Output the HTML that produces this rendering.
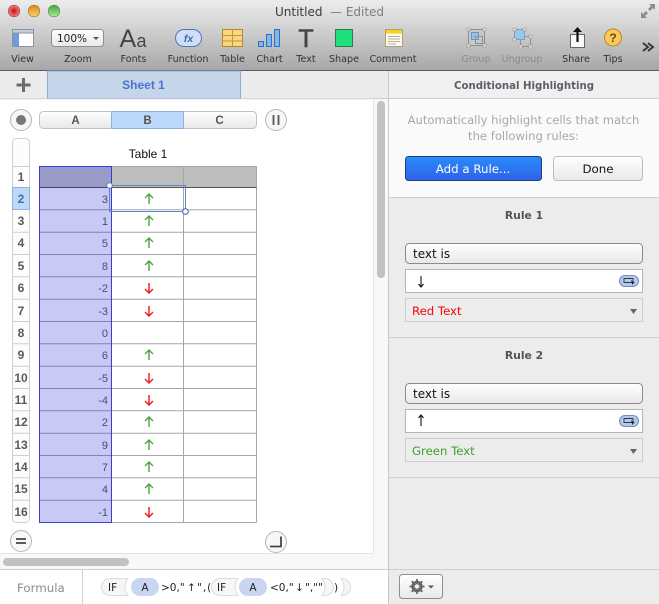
<!DOCTYPE html>
<html><head><meta charset="utf-8"><style>
html,body{margin:0;padding:0;background:#fff;width:659px;height:604px;overflow:hidden}
svg{display:block}
text{font-family:"DejaVu Sans","Liberation Sans",sans-serif}
.l{font-size:9.6px;fill:#333;text-anchor:middle}
.g{font-size:9.6px;fill:#8b8b8b;text-anchor:middle}
.h{font-family:"Liberation Sans",sans-serif;font-weight:bold;font-size:11.5px;fill:#555;text-anchor:middle}
.r{font-family:"Liberation Sans",sans-serif;font-weight:bold;font-size:12px;fill:#5a5a5a;text-anchor:middle}
.n{font-family:"Liberation Sans",sans-serif;font-size:11px;fill:#4a4a78;text-anchor:end}
.i{font-size:12px;fill:#111}
.f{font-size:10.5px;fill:#222}
.c{fill:#f6f6f6;stroke:#dcdcdc}
</style></head><body>
<svg xmlns="http://www.w3.org/2000/svg" width="659" height="604" viewBox="0 0 659 604">
<defs>
<linearGradient id="tb" x1="0" y1="0" x2="0" y2="1"><stop offset="0" stop-color="#ececec"/><stop offset=".4" stop-color="#d2d2d2"/><stop offset="1" stop-color="#a8a8a8"/></linearGradient>
<linearGradient id="btn" x1="0" y1="0" x2="0" y2="1"><stop offset="0" stop-color="#fff"/><stop offset="1" stop-color="#e8e8e8"/></linearGradient>
<linearGradient id="blue" x1="0" y1="0" x2="0" y2="1"><stop offset="0" stop-color="#2a8bfb"/><stop offset="1" stop-color="#2f62ea"/></linearGradient>
<radialGradient id="rd"><stop offset="0" stop-color="#b01010"/><stop offset=".4" stop-color="#e03a3a"/><stop offset="1" stop-color="#f08080"/></radialGradient>
<linearGradient id="yl" x1="0" y1="0" x2="0" y2="1"><stop offset="0" stop-color="#d98a10"/><stop offset="1" stop-color="#fbd36c"/></linearGradient>
<linearGradient id="gr" x1="0" y1="0" x2="0" y2="1"><stop offset="0" stop-color="#3fa53f"/><stop offset="1" stop-color="#a8ec98"/></linearGradient>
</defs>

<!-- title/toolbar -->
<rect width="659" height="70" fill="url(#tb)"/>
<rect y="70" width="659" height="1" fill="#5c5c5c"/>
<circle cx="14" cy="11" r="5.8" fill="url(#rd)" stroke="#8a4a4a" stroke-width=".6"/>
<circle cx="34" cy="11" r="5.8" fill="url(#yl)" stroke="#96703a" stroke-width=".6"/>
<circle cx="54" cy="11" r="5.8" fill="url(#gr)" stroke="#4d8a4d" stroke-width=".6"/>
<text x="275" y="16" style="font-size:12px" fill="#3a3a3a">Untitled</text>
<text x="330" y="16" style="font-size:12px" fill="#7d7d7d">— Edited</text>
<path d="M641 18v-6l2 2 3-3 2 2-3 3 2 2zM655 4v6l-2-2-3 3-2-2 3-3-2-2z" fill="#8d8d8d"/>

<!-- View -->
<rect x="12.500" y="29.500" width="21" height="17" fill="#fff" stroke="#8a93a3"/>
<rect x="12.500" y="29.500" width="21" height="3.500" fill="#c8ccd4" stroke="#8a93a3"/>
<rect x="13" y="33" width="6" height="13" fill="#6f9bdc"/>
<text class="l" x="22.500" y="62">View</text>
<!-- Zoom -->
<rect x="51.500" y="29.500" width="52" height="17" rx="3" fill="url(#btn)" stroke="#8f8f8f"/>
<text x="57" y="42" style="font-size:10.500px" fill="#222">100%</text>
<path d="M93 37h6l-3 3z" fill="#555"/>
<text class="l" x="78" y="62">Zoom</text>
<!-- Fonts -->
<text x="119.500" y="47" style="font-family:'Liberation Sans',sans-serif;font-size:25px" fill="#444">A</text>
<text x="136.500" y="47" style="font-family:'Liberation Sans',sans-serif;font-size:18px" fill="#444">a</text>
<text class="l" x="133.500" y="62">Fonts</text>
<!-- Function -->
<rect x="175.500" y="29.500" width="26" height="17" rx="8.500" fill="#cfe0f6" stroke="#4f78b8"/>
<text x="188.500" y="42" style="font-family:'Liberation Sans',sans-serif;font-size:10.500px;font-style:italic;font-weight:bold;text-anchor:middle" fill="#3f69a8">fx</text>
<text class="l" x="188" y="62">Function</text>
<!-- Table -->
<rect x="222.500" y="29.500" width="20" height="17" fill="#fbd77c" stroke="#b5853a"/>
<path d="M222.500 35.500h20M222.500 41h20M232.500 29.500v17" stroke="#c2924a" fill="none"/>
<text class="l" x="232.500" y="62">Table</text>
<!-- Chart -->
<rect x="258.500" y="41.500" width="5" height="5" fill="#7db8ef" stroke="#2f71c0"/>
<rect x="266.500" y="34.500" width="5" height="12" fill="#7db8ef" stroke="#2f71c0"/>
<rect x="274.500" y="29.500" width="5" height="17" fill="#7db8ef" stroke="#2f71c0"/>
<text class="l" x="269.500" y="62">Chart</text>
<!-- Text -->
<text x="306" y="47" style="font-family:'Liberation Sans',sans-serif;font-size:25px;text-anchor:middle;stroke:#444;stroke-width:.6" fill="#444">T</text>
<text class="l" x="306" y="62">Text</text>
<!-- Shape -->
<rect x="335.500" y="29.500" width="17" height="17" fill="#1fe07a" stroke="#2d7a4d"/>
<text class="l" x="344" y="62">Shape</text>
<!-- Comment -->
<rect x="385.500" y="29.500" width="17" height="17" fill="#fdfbe6" stroke="#a8a27a"/>
<rect x="386" y="30" width="16" height="3.500" fill="#f7d21e"/>
<path d="M388 36.500h12M388 39h12M388 41.500h12M388 44h8" stroke="#999" stroke-width=".8"/>
<text class="l" x="393" y="62">Comment</text>
<!-- Group -->
<rect x="468.500" y="29.500" width="16" height="16" fill="#c8c8c8" stroke="#8f8f8f"/>
<rect x="471.500" y="32.500" width="7" height="7" fill="#97c0e6" stroke="#6f93b8"/>
<rect x="475.500" y="36.500" width="7" height="7" fill="none" stroke="#909090"/>
<path d="M467 28h3v3h-3zM483 28h3v3h-3zM467 44h3v3h-3zM483 44h3v3h-3z" fill="#e4e4e4" stroke="#8f8f8f" stroke-width=".6"/>
<text class="g" x="476" y="62">Group</text>
<!-- Ungroup -->
<rect x="520.500" y="36.500" width="10" height="10" fill="none" stroke="#909090"/>
<rect x="514.500" y="29.500" width="10" height="10" fill="#97c8ee" stroke="#7aa0c4"/>
<path d="M513 28h3v3h-3zM523 28h3v3h-3zM513 38h3v3h-3zM529 35h3v3h-3zM519 45h3v3h-3zM529 45h3v3h-3z" fill="#e4e4e4" stroke="#8f8f8f" stroke-width=".6"/>
<text class="g" x="522" y="62">Ungroup</text>
<!-- Share -->
<rect x="570.500" y="34.500" width="14" height="13" fill="#fafafa" stroke="#666"/>
<path d="M577.500 42V30" stroke="#111" stroke-width="2.200"/>
<path d="M573 32l4.500-5 4.500 5z" fill="#111"/>
<text class="l" x="576" y="62">Share</text>
<!-- Tips -->
<circle cx="613" cy="37.500" r="8.500" fill="#fbc95a" stroke="#b98a2a"/>
<text x="613" y="42" style="font-family:'Liberation Sans',sans-serif;font-size:12px;font-weight:bold;text-anchor:middle" fill="#6b4a10">?</text>
<text class="l" x="613" y="62">Tips</text>
<path d="M643 43l5 4-5 4M648 43l5 4-5 4" fill="none" stroke="#333" stroke-width="1.800"/>

<!-- tab bar -->
<rect y="71" width="389" height="27" fill="#ebebeb"/>
<rect x="389" y="71" width="270" height="27" fill="#f0f0f0"/>
<rect y="98" width="659" height="1" fill="#cfcfcf"/>
<rect x="47.500" y="71" width="193" height="27.500" fill="#c5d5ea" stroke="#8daad8"/>
<text x="143.500" y="89" style="font-family:'Liberation Sans',sans-serif;font-weight:bold;font-size:12px;text-anchor:middle" fill="#4a74d0">Sheet 1</text>
<path d="M23.500 78v14M16.500 85h14" stroke="#6d6d6d" stroke-width="3"/>
<rect x="388" y="71" width="1" height="28" fill="#c8c8c8"/>
<text x="524" y="89" style="font-size:10.200px;font-weight:bold;text-anchor:middle" fill="#5a6068">Conditional Highlighting</text>

<!-- canvas surround -->
<rect y="99" width="389" height="470" fill="#f8f8f8"/>
<rect x="-2" y="99" width="375.500" height="454.500" fill="#fff" stroke="#e3e3e3"/>
<rect x="377" y="101" width="8" height="177" rx="4" fill="#c2c2c2"/>
<rect x="3" y="558" width="126" height="8" rx="4" fill="#c2c2c2"/>
<rect y="569" width="659" height="1" fill="#cfcfcf"/>
<rect x="388" y="99" width="1" height="505" fill="#c8c8c8"/>

<!-- round buttons -->
<g fill="#f7f7f7" stroke="#b5b5b5">
<circle cx="21" cy="120" r="10.500"/><circle cx="276" cy="120" r="10.500"/>
<circle cx="21" cy="541" r="10.500"/><circle cx="276" cy="542" r="10.500"/>
</g>
<circle cx="21" cy="120" r="5" fill="#777"/>
<path d="M273.500 115v10M278.500 115v10" stroke="#555" stroke-width="1.800" fill="none"/>
<path d="M16 539h10M16 543h10" stroke="#444" stroke-width="1.800"/>
<path d="M270 546.500h11v-10" stroke="#444" stroke-width="1.800" fill="none"/>

<!-- column header -->
<rect x="39.500" y="111.500" width="217" height="17" rx="4" fill="url(#btn)" stroke="#c2c2c2"/>
<rect x="111.500" y="111.500" width="72" height="17" fill="#bcd8fb" stroke="#93b0d8"/>
<text class="h" x="75.500" y="124">A</text><text class="h" x="147.500" y="124">B</text><text class="h" x="219.500" y="124">C</text>

<!-- row header -->
<rect x="12.500" y="138.500" width="17" height="384" rx="4" fill="#fcfcfc" stroke="#cfcfcf"/>
<rect x="12.500" y="187.500" width="17" height="22" fill="#bcd8fb" stroke="#93b0d8"/>
<path d="M12.500 166.500h17M12.500 232.200h17M12.500 254.500h17M12.500 276.800h17M12.500 299.200h17M12.500 321.500h17M12.500 343.800h17M12.500 366.200h17M12.500 388.500h17M12.500 410.800h17M12.500 433.200h17M12.500 455.500h17M12.500 477.800h17M12.500 500.200h17" stroke="#cfcfcf"/>
<g>
<text class="r" x="21" y="181">1</text><text class="r" x="21" y="203" style="fill:#4a6f9c">2</text><text class="r" x="21" y="225">3</text><text class="r" x="21" y="247">4</text><text class="r" x="21" y="270">5</text><text class="r" x="21" y="292">6</text><text class="r" x="21" y="315">7</text><text class="r" x="21" y="337">8</text><text class="r" x="21" y="359">9</text><text class="r" x="21" y="382">10</text><text class="r" x="21" y="404">11</text><text class="r" x="21" y="426">12</text><text class="r" x="21" y="449">13</text><text class="r" x="21" y="471">14</text><text class="r" x="21" y="493">15</text><text class="r" x="21" y="516">16</text>
</g>

<!-- table -->
<text x="148" y="158" style="font-family:'Liberation Sans',sans-serif;font-size:12px;text-anchor:middle" fill="#111">Table 1</text>
<rect x="111.500" y="166.500" width="145" height="21" fill="#bcbfbe"/>
<rect x="39.500" y="166.500" width="72" height="21" fill="#9a9ac8"/>
<rect x="39.500" y="187.500" width="72" height="335" fill="#c8c9f4"/>
<path d="M111.500 209.800H256.500M111.500 232.200H256.500M111.500 254.500H256.500M111.500 276.800H256.500M111.500 299.200H256.500M111.500 321.500H256.500M111.500 343.800H256.500M111.500 366.200H256.500M111.500 388.500H256.500M111.500 410.800H256.500M111.500 433.200H256.500M111.500 455.500H256.500M111.500 477.800H256.500M111.500 500.200H256.500" stroke="#a6a6a6" fill="none"/>
<path d="M39.500 209.800H111.500M39.500 232.200H111.500M39.500 254.500H111.500M39.500 276.800H111.500M39.500 299.200H111.500M39.500 321.500H111.500M39.500 343.800H111.500M39.500 366.200H111.500M39.500 388.500H111.500M39.500 410.800H111.500M39.500 433.200H111.500M39.500 455.500H111.500M39.500 477.800H111.500M39.500 500.200H111.500" stroke="#8484b0" fill="none"/>
<path d="M183.500 166.500V522.500M256.500 166.500V522.500M111.500 522.500H256.500M111.500 166.500H256.500" stroke="#a6a6a6" fill="none"/>
<path d="M111.500 187.500H256.500" stroke="#555"/>
<path d="M39.500 187.500H111.500" stroke="#44446e"/>
<rect x="39.500" y="166.500" width="72" height="356" fill="none" stroke="#3a3fcf"/>

<g>
<text class="n" x="108" y="203">3</text><text class="n" x="108" y="225">1</text><text class="n" x="108" y="247">5</text><text class="n" x="108" y="270">8</text><text class="n" x="108" y="292">-2</text><text class="n" x="108" y="315">-3</text><text class="n" x="108" y="337">0</text><text class="n" x="108" y="359">6</text><text class="n" x="108" y="382">-5</text><text class="n" x="108" y="404">-4</text><text class="n" x="108" y="426">2</text><text class="n" x="108" y="449">9</text><text class="n" x="108" y="471">7</text><text class="n" x="108" y="493">4</text><text class="n" x="108" y="516">-1</text>
</g>

<!-- arrows -->
<g fill="none" stroke="#4aa63c" stroke-width="1.400">
<path d="M149 204v-10M145 198l4-4 4 4"/>
<path d="M149 226v-10M145 220l4-4 4 4"/>
<path d="M149 248v-10M145 242l4-4 4 4"/>
<path d="M149 271v-10M145 265l4-4 4 4"/>
<path d="M149 360v-10M145 354l4-4 4 4"/>
<path d="M149 427v-10M145 421l4-4 4 4"/>
<path d="M149 450v-10M145 444l4-4 4 4"/>
<path d="M149 472v-10M145 466l4-4 4 4"/>
<path d="M149 494v-10M145 488l4-4 4 4"/>
</g>
<g fill="none" stroke="#f01818" stroke-width="1.400">
<path d="M149 283v10M145 289l4 4 4-4"/>
<path d="M149 306v10M145 312l4 4 4-4"/>
<path d="M149 373v10M145 379l4 4 4-4"/>
<path d="M149 395v10M145 401l4 4 4-4"/>
<path d="M149 507v10M145 513l4 4 4-4"/>
</g>

<!-- selection -->
<rect x="109.500" y="185.500" width="76" height="26" fill="none" stroke="#5b86d0"/>
<circle cx="109.500" cy="185.500" r="2.800" fill="#fff" stroke="#5b7fc0"/>
<circle cx="185.500" cy="211.500" r="2.800" fill="#fff" stroke="#3a62b0"/>

<!-- inspector -->
<rect x="389" y="99" width="270" height="98" fill="#fafafa"/>
<rect x="389" y="197" width="270" height="407" fill="#ececec"/>
<rect x="389" y="197" width="270" height="1" fill="#cfcfcf"/>
<rect x="389" y="337" width="270" height="1" fill="#cfcfcf"/>
<rect x="389" y="477" width="270" height="1" fill="#cfcfcf"/>
<rect x="389" y="569" width="270" height="1" fill="#cfcfcf"/>
<text x="523.500" y="124" style="font-size:11.600px;text-anchor:middle" fill="#a8a8a8">Automatically highlight cells that match</text>
<text x="523.500" y="140" style="font-size:11.600px;text-anchor:middle" fill="#a8a8a8">the following rules:</text>

<rect x="405.500" y="156.500" width="136" height="24" rx="3" fill="url(#blue)" stroke="#1d3f80"/>
<text x="473" y="173" style="font-size:11.800px;text-anchor:middle" fill="#fff">Add a Rule...</text>
<rect x="553.500" y="156.500" width="89" height="24" rx="3" fill="url(#btn)" stroke="#b8bcc4"/>
<text x="598" y="173" style="font-size:11.800px;text-anchor:middle" fill="#111">Done</text>

<text x="524" y="219" style="font-size:10.800px;font-weight:bold;text-anchor:middle" fill="#555">Rule 1</text>
<rect x="405.500" y="243.500" width="237" height="20" rx="4" fill="url(#btn)" stroke="#8a8a8a"/>
<text class="i" x="413" y="258">text is</text>
<rect x="405.500" y="269.500" width="237" height="23" fill="#fff" stroke="#b4b4b4"/>
<path d="M421 276v10M418.500 284l2.500 3 2.500-3" fill="none" stroke="#111" stroke-width="1.100"/>
<rect x="619.500" y="275.500" width="19" height="11" rx="5.500" fill="#b4c8ec" stroke="#6f8cc4"/>
<path d="M624 278.500h9v4h-9z" fill="none" stroke="#334" stroke-width=".9"/><path d="M631 280l4 3-2 .5-.5 2z" fill="#223"/>
<rect x="405.500" y="298.500" width="237" height="23" fill="#ececec" stroke="#cdcdcd"/>
<text x="412" y="315" style="font-size:11.700px" fill="#f00">Red Text</text>
<path d="M630 309h7l-3.500 5z" fill="#666"/>

<text x="524" y="359" style="font-size:10.800px;font-weight:bold;text-anchor:middle" fill="#555">Rule 2</text>
<rect x="405.500" y="383.500" width="237" height="20" rx="4" fill="url(#btn)" stroke="#8a8a8a"/>
<text class="i" x="413" y="398">text is</text>
<rect x="405.500" y="409.500" width="237" height="23" fill="#fff" stroke="#b4b4b4"/>
<path d="M421 426v-10M418.500 418l2.500-3 2.500 3" fill="none" stroke="#111" stroke-width="1.100"/>
<rect x="619.500" y="415.500" width="19" height="11" rx="5.500" fill="#b4c8ec" stroke="#6f8cc4"/>
<path d="M624 418.500h9v4h-9z" fill="none" stroke="#334" stroke-width=".9"/><path d="M631 420l4 3-2 .5-.5 2z" fill="#223"/>
<rect x="405.500" y="438.500" width="237" height="23" fill="#ececec" stroke="#cdcdcd"/>
<text x="412" y="455" style="font-size:11.700px" fill="#3fa02a">Green Text</text>
<path d="M630 449h7l-3.500 5z" fill="#666"/>

<!-- gear -->
<rect x="399.500" y="574.500" width="43" height="24" rx="3" fill="url(#btn)" stroke="#8f8f8f"/>
<circle cx="417" cy="586.500" r="4.500" fill="none" stroke="#666" stroke-width="2.500"/>
<path d="M417 579v15M409.500 586.500h15M411.700 581.200l10.600 10.600M411.700 591.800l10.600-10.600" stroke="#666" stroke-width="1.800"/>
<circle cx="417" cy="586.500" r="2.200" fill="#f0f0f0"/>
<path d="M428 585.500h6l-3 3z" fill="#555"/>

<!-- formula bar -->
<rect x="82" y="570" width="1" height="34" fill="#cfcfcf"/>
<text x="17" y="592" style="font-size:11.800px" fill="#8a8a8a">Formula</text>
<path class="c" d="M110 578.500H128Q122 587 128 595.500H110A8.500 8.500 0 0 1 110 578.500Z"/>
<text class="f" x="108" y="591">IF</text>
<rect x="131" y="578" width="28" height="18" rx="9" fill="#c9d6f2"/>
<text class="f" x="145" y="591" style="text-anchor:middle">A</text>
<text class="f" x="161" y="591">&gt;0,"</text>
<text class="f" x="187" y="591">↑</text>
<text class="f" x="197" y="591" style="letter-spacing:1px">",(</text>
<path class="c" d="M220 578.500H238Q232 587 238 595.500H220A8.500 8.500 0 0 1 220 578.500Z"/>
<text class="f" x="217" y="591">IF</text>
<rect x="239" y="578" width="28" height="18" rx="9" fill="#c9d6f2"/>
<text class="f" x="253" y="591" style="text-anchor:middle">A</text>
<text class="f" x="270" y="591">&lt;0,"</text>
<text class="f" x="295" y="591">↓</text>
<text class="f" x="305" y="591">",""</text>
<path class="c" d="M322 578.500H325A8.500 8.500 0 0 1 325 595.500H322Q328 587 322 578.500Z"/>
<path class="c" d="M341 578.500H342A8.500 8.500 0 0 1 342 595.500H341Q347 587 341 578.500Z"/>
<text class="f" x="334" y="591">)</text>
</svg>
</body></html>
